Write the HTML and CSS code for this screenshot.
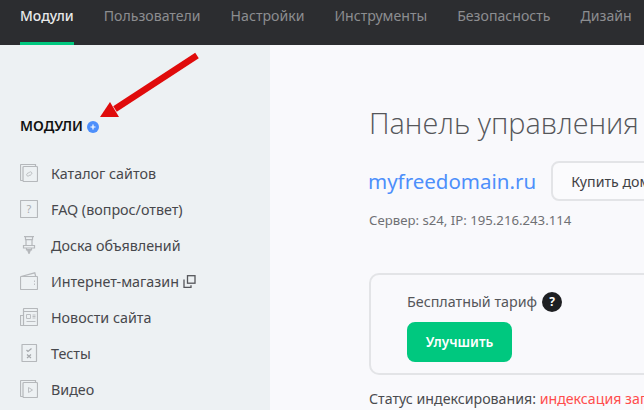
FILE: index.html
```html
<!DOCTYPE html>
<html lang="ru">
<head>
<meta charset="utf-8">
<title>Панель управления</title>
<link rel="stylesheet" href="styles.css">
</head>
<body>
<nav class="topnav">
  <a class="tab active">Модули</a>
  <a class="tab">Пользователи</a>
  <a class="tab">Настройки</a>
  <a class="tab">Инструменты</a>
  <a class="tab">Безопасность</a>
  <a class="tab">Дизайн</a>
</nav>
<div class="layout">
  <aside class="sidebar">
    <div class="side-title">МОДУЛИ <span class="plus"><svg width="12" height="12" viewBox="0 0 12 12"><circle cx="6" cy="6" r="6" fill="#4d8ffb"/><path d="M3.500 6h5M6 3.500v5" stroke="#fff" stroke-width="1.200"/></svg></span></div>
    <ul class="menu">
      <li><svg class="ico" viewBox="0 0 18 18"><path d="M3 16.500H1.200a.7.700 0 0 1-.7-.7V1.200a.7.700 0 0 1 .7-.7H15.500V3" class="ln"/><rect x="3" y="2.500" width="14.500" height="15" rx="1" class="ln"/><path d="M8.500 8.500l-1.500 1.300a1.300 1.300 0 0 0 2 1.900l1-.8M10 11.500l1.500-1.300a1.300 1.300 0 0 0-2-1.900l-1 .8" class="lt"/></svg>Каталог сайтов</li>
      <li><svg class="ico" viewBox="0 0 18 18"><rect x=".5" y=".5" width="17" height="17" rx=".5" class="ln"/><text x="9" y="13" class="qm">?</text></svg>FAQ (вопрос/ответ)</li>
      <li><svg class="ico" viewBox="0 0 18 18"><path d="M4 .7h10M5.500 .7v3h7v-3M6 3.700v5.500M12 3.700v5.500M3.500 9.500h11v2.500h-11zM6.500 12v2.500M11.500 12v2.500" class="ln"/><path d="M6.500 13h5L9.500 18h-1z" fill="#b5b8bb"/></svg>Доска объявлений</li>
      <li><svg class="ico" viewBox="0 0 18 18"><path d="M1.200 4.500h15.600a.7.700 0 0 1 .7.700v11.600a.7.700 0 0 1-.7.7H1.200a.7.700 0 0 1-.7-.7V5.200a.7.700 0 0 1 .7-.7zM1 4.500L14.800.8l.9 3.700" class="ln"/><path d="M14.500 8.500v1.500M14.500 11.500v1.500" class="lt"/></svg>Интернет-магазин<svg class="ext" width="13" height="13" viewBox="0 0 13 13"><rect x="4.500" y=".7" width="7.500" height="7.500" class="dk"/><path d="M1 4.500v7.800h7v-2" class="dk"/></svg></li>
      <li><svg class="ico" viewBox="0 0 18 18"><path d="M3.500 17.500H1.200a.7.700 0 0 1-.7-.7V7.500h3M3.500 17.500V1.200a.7.700 0 0 1 .7-.7h12.600a.7.700 0 0 1 .7.700v15.600a.7.700 0 0 1-.7.700H3.500M3.500 3.500h14" class="ln"/><path d="M6.500 6.500h4v4h-4zM12.500 7h3M12.500 8.500h3M12.500 10h3M6.500 13.500h9" class="lt"/></svg>Новости сайта</li>
      <li><svg class="ico" viewBox="0 0 18 18"><rect x="2" y=".5" width="14.500" height="17" rx=".5" class="ln"/><path d="M6.500 6l1.500 1.500L11.500 4.500M7 10.500l4 3.500M11 10.500l-4 3.500" class="lk"/></svg>Тесты</li>
      <li><svg class="ico" viewBox="0 0 18 18"><path d="M3 16.500H1.200a.7.700 0 0 1-.7-.7V1.200a.7.700 0 0 1 .7-.7H15.500V3" class="ln"/><rect x="3" y="2.500" width="14.500" height="15" rx="1" class="ln"/><path d="M8.500 7.500l4 2.500-4 2.500z" class="lt"/></svg>Видео</li>
    </ul>
  </aside>
  <main class="main">
    <h1 class="title">Панель управления</h1>
    <div class="domain-row">
      <a class="domain">myfreedomain.ru</a>
      <button class="buy">Купить домен</button>
    </div>
    <p class="server">Сервер: s24, IP: 195.216.243.114</p>
    <section class="plan">
      <div class="plan-name">Бесплатный тариф <span class="help">?</span></div>
      <button class="upgrade">Улучшить</button>
    </section>
    <p class="status">Статус индексирования: <span class="red">индексация запрещена</span></p>
  </main>
</div>
<svg class="arrow" width="110" height="80" viewBox="0 0 110 80"><path d="M97 3.500L15 57" stroke="#e00b0b" stroke-width="6.500" fill="none"/><path d="M0 65L10 50L19 65z" fill="#e00b0b"/></svg>
</body>
</html>
```

FILE: styles.css
```css
* { box-sizing: border-box; }
html, body { margin: 0; height: 100%; overflow: hidden; }
body { position: relative; width: 644px; height: 410px; font-family: "Noto Sans", sans-serif; background: #f9f9fc; color: #3f4044; }
.topnav { display: flex; gap: 30px; height: 45px; padding-left: 20px; background: #2c2d30; white-space: nowrap; overflow: hidden; }
.tab { font-size: 14.120px; line-height: 32px; height: 45px; color: #8c8d90; }
.tab.active { color: #e8e9ea; font-weight: 500; font-size: 14px; border-bottom: 3px solid #00c87f; }
.layout { display: flex; height: 365px; }
.sidebar { flex: 0 0 270px; background: #edf1f3; padding: 71px 0 0 20px; }
.side-title { display: flex; align-items: center; gap: 4px; font-size: 14px; line-height: 20px; font-weight: 600; color: #111; }
.plus { display: flex; margin-top: 2px; }
.menu { list-style: none; margin: 19px 0 0; padding: 0; }
.menu li { display: flex; align-items: center; height: 36px; font-size: 14.300px; color: #47484c; white-space: nowrap; }
.ico { width: 18px; height: 18px; margin-right: 13px; flex: none; }
.ln { fill: none; stroke: #b5b8bb; stroke-width: 1.200; }
.lt { fill: none; stroke: #bcbfc2; stroke-width: 1; }
.lk { fill: none; stroke: #a5a8ab; stroke-width: 1.200; }
.qm { font: 11px "Noto Sans", sans-serif; fill: #a9acaf; text-anchor: middle; }
.ext { margin-left: 4px; flex: none; }
.dk { fill: none; stroke: #55565a; stroke-width: 1.300; }
.main { flex: 1; min-width: 0; padding: 56px 0 0 99px; white-space: nowrap; overflow: hidden; }
.title { margin: 0; font-family: "Open Sans", sans-serif; font-size: 28.800px; line-height: 44px; font-weight: 300; color: #55565a; }
.domain-row { display: flex; align-items: center; gap: 15px; margin-top: 16px; }
.domain { font-size: 20.500px; color: #4d8ffb; margin-left: -1px; }
.buy { flex: none; width: 200px; height: 40px; padding: 0 0 0 18px; text-align: left; border: 2px solid #e3e4e7; border-radius: 8px; background: #fbfbfd; font: 14.200px "Noto Sans", sans-serif; color: #3f4044; }
.server { margin: 10px 0 0; font-size: 13.200px; line-height: 18px; color: #6f7074; }
.plan { width: 400px; height: 102px; margin-top: 44px; padding: 17px 0 0 36px; border: 2px solid #e3e4e7; border-radius: 10px; }
.plan-name { display: flex; align-items: center; gap: 5px; font-size: 14.300px; line-height: 20px; color: #55565a; }
.help { display: flex; align-items: center; justify-content: center; width: 20px; height: 20px; border-radius: 50%; background: #1e1f22; color: #fff; font-size: 12px; font-weight: 700; }
.upgrade { display: block; width: 105px; height: 40px; margin-top: 10px; border: 0; border-radius: 8px; background: #00c87f; color: #fff; font: 600 13.500px "Noto Sans", sans-serif; }
.status { margin: 14px 0 0; font-size: 14.200px; line-height: 20px; color: #4a4b4f; }
.red { color: #ff4d4d; }
.arrow { position: absolute; left: 100px; top: 52px; }
```
